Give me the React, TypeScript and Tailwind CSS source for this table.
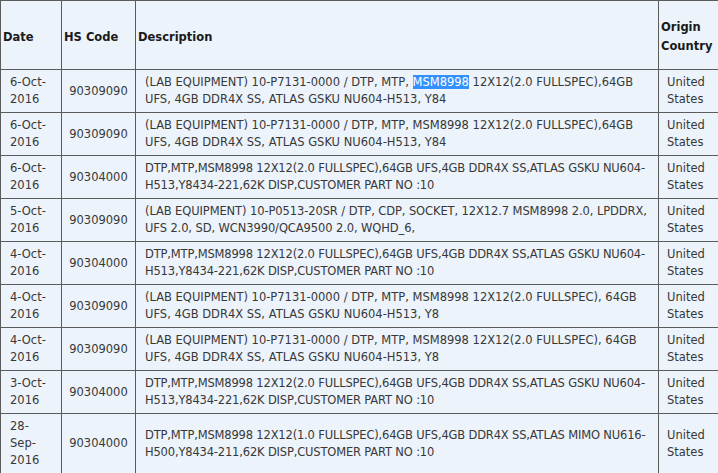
type Row = {
  date: string[];
  code: string;
  desc: string[];
  highlight?: boolean;
  tracking?: string;
};

const rows: Row[] = [
  {
    date: ["6-Oct-", "2016"],
    code: "90309090",
    desc: [
      "(LAB EQUIPMENT) 10-P7131-0000 / DTP, MTP, MSM8998 12X12(2.0 FULLSPEC),64GB",
      "UFS, 4GB DDR4X SS, ATLAS GSKU NU604-H513, Y84",
    ],
    highlight: true,
  },
  {
    date: ["6-Oct-", "2016"],
    code: "90309090",
    desc: [
      "(LAB EQUIPMENT) 10-P7131-0000 / DTP, MTP, MSM8998 12X12(2.0 FULLSPEC),64GB",
      "UFS, 4GB DDR4X SS, ATLAS GSKU NU604-H513, Y84",
    ],
  },
  {
    date: ["6-Oct-", "2016"],
    code: "90304000",
    desc: [
      "DTP,MTP,MSM8998 12X12(2.0 FULLSPEC),64GB UFS,4GB DDR4X SS,ATLAS GSKU NU604-",
      "H513,Y8434-221,62K DISP,CUSTOMER PART NO :10",
    ],
    tracking: "tracking-[-0.17px]",
  },
  {
    date: ["5-Oct-", "2016"],
    code: "90309090",
    desc: [
      "(LAB EQUIPMENT) 10-P0513-20SR / DTP, CDP, SOCKET, 12X12.7 MSM8998 2.0, LPDDRX,",
      "UFS 2.0, SD, WCN3990/QCA9500 2.0, WQHD_6,",
    ],
    tracking: "tracking-[-0.1px]",
  },
  {
    date: ["4-Oct-", "2016"],
    code: "90304000",
    desc: [
      "DTP,MTP,MSM8998 12X12(2.0 FULLSPEC),64GB UFS,4GB DDR4X SS,ATLAS GSKU NU604-",
      "H513,Y8434-221,62K DISP,CUSTOMER PART NO :10",
    ],
    tracking: "tracking-[-0.17px]",
  },
  {
    date: ["4-Oct-", "2016"],
    code: "90309090",
    desc: [
      "(LAB EQUIPMENT) 10-P7131-0000 / DTP, MTP, MSM8998 12X12(2.0 FULLSPEC), 64GB",
      "UFS, 4GB DDR4X SS, ATLAS GSKU NU604-H513, Y8",
    ],
  },
  {
    date: ["4-Oct-", "2016"],
    code: "90309090",
    desc: [
      "(LAB EQUIPMENT) 10-P7131-0000 / DTP, MTP, MSM8998 12X12(2.0 FULLSPEC), 64GB",
      "UFS, 4GB DDR4X SS, ATLAS GSKU NU604-H513, Y8",
    ],
  },
  {
    date: ["3-Oct-", "2016"],
    code: "90304000",
    desc: [
      "DTP,MTP,MSM8998 12X12(2.0 FULLSPEC),64GB UFS,4GB DDR4X SS,ATLAS GSKU NU604-",
      "H513,Y8434-221,62K DISP,CUSTOMER PART NO :10",
    ],
    tracking: "tracking-[-0.17px]",
  },
  {
    date: ["28-", "Sep-", "2016"],
    code: "90304000",
    desc: [
      "DTP,MTP,MSM8998 12X12(1.0 FULLSPEC),64GB UFS,4GB DDR4X SS,ATLAS MIMO NU616-",
      "H500,Y8434-211,62K DISP,CUSTOMER PART NO :10",
    ],
    tracking: "tracking-[-0.17px]",
  },
];

function Lines({ lines }: { lines: string[] }) {
  return (
    <>
      {lines.map((l, i) => (
        <div key={i} className="whitespace-nowrap">
          {l}
        </div>
      ))}
    </>
  );
}

function DescLine({ text, highlight, tracking }: { text: string; highlight?: boolean; tracking?: string }) {
  const cls = `whitespace-nowrap ${tracking ?? ""}`;
  if (!highlight || !text.includes("MSM8998")) {
    return <div className={cls}>{text}</div>;
  }
  const [before, after] = text.split("MSM8998");
  return (
    <div className={cls}>
      {before}
      <span className="bg-[#3390ff] text-white">MSM8998</span>
      {after}
    </div>
  );
}

function App() {
  const cell = "border border-[#5c5c5c] align-middle";
  const head =
    "border border-[#5c5c5c] px-[2px] pt-[4px] text-left align-middle font-bold text-[#1a1a1a]";

  return (
    <div
      className="h-[473px] w-[718px] overflow-hidden bg-white"
      style={{ fontFamily: '"DejaVu Sans", Verdana, sans-serif' }}
    >
      <table className="w-[780px] table-fixed border-collapse bg-[#ecf3fb] text-[11.5px] leading-[17px] text-[#383838]">
        <colgroup>
          <col className="w-[61px]" />
          <col className="w-[74px]" />
          <col className="w-[523px]" />
          <col className="w-[122px]" />
        </colgroup>
        <thead>
          <tr className="h-[69px] text-[11.5px] leading-[19px]">
            <th className={head}>Date</th>
            <th className={head}>HS Code</th>
            <th className={head}>Description</th>
            <th className={head}>
              Origin
              <br />
              Country
            </th>
          </tr>
        </thead>
        <tbody>
          {rows.map((r, i) => (
            <tr key={i}>
              <td className={`${cell} py-1 pl-[9px] pr-1`}>
                <Lines lines={r.date} />
              </td>
              <td className={`${cell} py-1 text-center`}>{r.code}</td>
              <td className={`${cell} py-1 pl-[9px] pr-2`}>
                {r.desc.map((d, j) => (
                  <DescLine key={j} text={d} highlight={r.highlight} tracking={r.tracking} />
                ))}
              </td>
              <td className={`${cell} py-1 pl-[8px]`}>
                United
                <br />
                States
              </td>
            </tr>
          ))}
        </tbody>
      </table>
    </div>
  );
}

export default App;
